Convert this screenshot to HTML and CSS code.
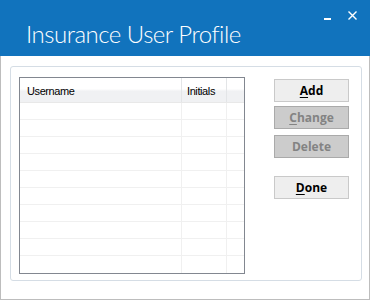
FILE: index.html
```html
<!DOCTYPE html>
<html>
<head>
<meta charset="utf-8">
<link rel="stylesheet" href="styles.css">
</head>
<body>
<div class="window">
  <div class="titlebar">
    <div class="title">Insurance User Profile</div>
    <div class="controls">
      <span class="minimize"></span>
      <svg class="close" width="9" height="9" viewBox="0 0 9 9"><path d="M0.5 0.5 L8.5 8.5 M8.5 0.5 L0.5 8.5" stroke="#fff" stroke-width="1.4" fill="none"/></svg>
    </div>
  </div>
  <div class="content">
    <div class="groupbox">
      <div class="listview">
        <div class="header">
          <div class="hcell c1">Username</div>
          <div class="hcell c2">Initials</div>
          <div class="hcell c3"></div>
        </div>
        <div class="row"><div class="cell c1"></div><div class="cell c2"></div><div class="cell c3"></div></div>
        <div class="row"><div class="cell c1"></div><div class="cell c2"></div><div class="cell c3"></div></div>
        <div class="row"><div class="cell c1"></div><div class="cell c2"></div><div class="cell c3"></div></div>
        <div class="row"><div class="cell c1"></div><div class="cell c2"></div><div class="cell c3"></div></div>
        <div class="row"><div class="cell c1"></div><div class="cell c2"></div><div class="cell c3"></div></div>
        <div class="row"><div class="cell c1"></div><div class="cell c2"></div><div class="cell c3"></div></div>
        <div class="row"><div class="cell c1"></div><div class="cell c2"></div><div class="cell c3"></div></div>
        <div class="row"><div class="cell c1"></div><div class="cell c2"></div><div class="cell c3"></div></div>
        <div class="row"><div class="cell c1"></div><div class="cell c2"></div><div class="cell c3"></div></div>
        <div class="row last"><div class="cell c1"></div><div class="cell c2"></div><div class="cell c3"></div></div>
      </div>
      <div class="buttons">
        <button class="btn add"><u>A</u>dd</button>
        <button class="btn change" disabled><u>C</u>hange</button>
        <button class="btn delete" disabled>Delete</button>
        <button class="btn done"><u>D</u>one</button>
      </div>
    </div>
  </div>
</div>
</body>
</html>
```

FILE: styles.css
```css
* { box-sizing: border-box; }
html, body { margin: 0; padding: 0; background: #ffffff; }
.window { width: 370px; height: 300px; display: flex; flex-direction: column; }
.titlebar {
  height: 56px;
  background: #1173bd;
  display: flex;
  align-items: flex-start;
  padding-left: 26px;
}
.title {
  font-family: "Lato", "Open Sans", sans-serif;
  font-weight: 300;
  font-size: 24px;
  letter-spacing: -0.5px;
  line-height: 24px;
  margin-top: 22px;
  color: #ffffff;
  white-space: nowrap;
}
.controls {
  margin-left: auto;
  padding-right: 13px;
  padding-top: 11px;
  display: flex;
  align-items: flex-start;
  gap: 17px;
}
.minimize { display: block; width: 7px; height: 2px; background: #fff; margin-top: 7px; }
.close { display: block; }
.content {
  height: 244px;
  border: 1px solid #bdbdbd;
  border-top: none;
  padding: 10px 0 0 9px;
}
.groupbox {
  width: 352px;
  height: 215px;
  border: 1px solid #d5dde5;
  border-radius: 3px;
  padding: 10px 0 0 8px;
  display: flex;
  align-items: flex-start;
}
.listview {
  width: 226px;
  height: 197px;
  border: 1px solid #828790;
  background: #fff;
  font-family: "Liberation Sans", Arial, sans-serif;
  font-size: 11px;
  color: #000;
}
.header {
  display: flex;
  height: 25px;
  background: linear-gradient(#ffffff 0%, #ffffff 45%, #f0f1f3 55%, #f0f1f3 100%);
  border-bottom: 1px solid #e8e8e8;
}
.hcell {
  line-height: 24px;
  padding-top: 1px;
  letter-spacing: -0.4px;
  border-right: 1px solid #e3e5e7;
  white-space: nowrap;
}
.c1 { width: 162px; padding-left: 7px; }
.c2 { width: 45px; padding-left: 5px; }
.c3 { flex: 1; border-right: none; }
.row { display: flex; height: 17px; border-bottom: 1px solid #f0f0f0; }
.row.last { border-bottom: none; }
.cell { border-right: 1px solid #f0f0f0; }
.cell.c3 { border-right: none; }
.buttons {
  margin-left: 29px;
  margin-top: 2px;
  display: flex;
  flex-direction: column;
}
.btn {
  width: 75px;
  height: 23px;
  margin: 0;
  padding: 0;
  font-family: "Open Sans", sans-serif;
  font-weight: 700;
  font-size: 12px;
  color: #000;
  background: #eeeeee;
  border: 1px solid #c9c9c9;
  border-radius: 0;
  line-height: 20px;
}
.btn u { text-decoration-thickness: 1px; text-underline-offset: 2px; }
.btn:disabled { background: #cccccc; border-color: #aaaaaa; color: #838383; }
.change { margin-top: 4px; }
.delete { margin-top: 6px; }
.done { margin-top: 18px; }
```
